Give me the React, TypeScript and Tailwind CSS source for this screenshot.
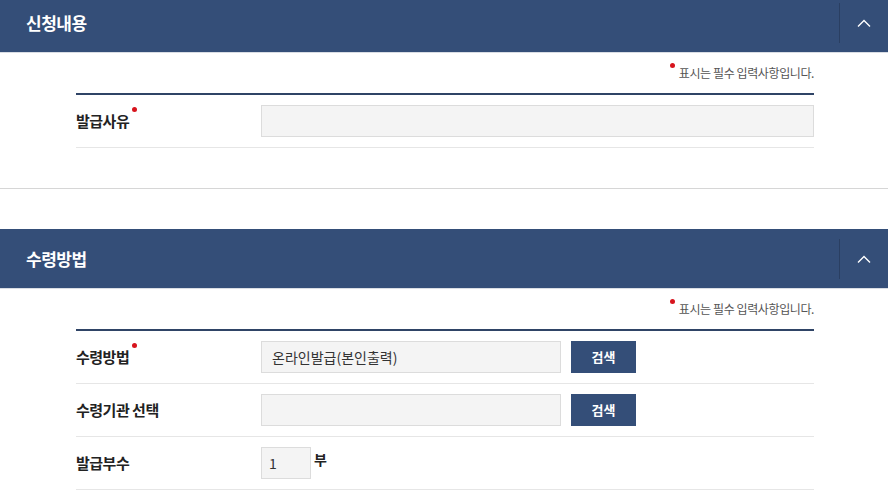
import React from 'react'

const font = { fontFamily: '"Noto Sans CJK KR", "Noto Sans", sans-serif' }

function SectionHeader({ title, shift }: { title: string; shift?: boolean }) {
  return (
    <div
      className={`flex items-center justify-between h-[60px] bg-[#344e78] border-b border-[#d9dde4] ${
        shift ? '-mt-[7px]' : ''
      }`}
    >
      <h2 className="pl-[26px] text-[17px] font-bold text-white tracking-[-0.5px]">{title}</h2>
      <div className="flex items-center h-[40px] border-l border-[#2a3f62]">
        <button className="w-[48px] h-full flex items-center justify-center">
          <svg width="14" height="8" viewBox="0 0 14 8" fill="none">
            <path d="M1 7.5L7 1.5L13 7.5" stroke="white" strokeWidth="1.4" />
          </svg>
        </button>
      </div>
    </div>
  )
}

function Required() {
  return <span className="ml-[3px] -mt-[24px] w-[5px] h-[5px] rounded-full bg-[#d7141d] inline-block" />
}

function Note() {
  return (
    <div className="flex justify-end items-start pt-[12px] pb-[12px]">
      <span className="w-[5px] h-[5px] rounded-full bg-[#d7141d] mr-[4px] -mt-[2px]" />
      <span className="text-[12px] leading-[16px] text-[#555] tracking-[-0.4px]">표시는 필수 입력사항입니다.</span>
    </div>
  )
}

function Row({ label, required, children }: { label: string; required?: boolean; children: React.ReactNode }) {
  return (
    <div className="flex items-center h-[53px] border-b border-[#e6e6e6]">
      <div className="w-[185px] flex items-center text-[15px] font-bold text-[#222] tracking-[-0.5px]">
        {label}
        {required && <Required />}
      </div>
      <div className="flex-1 flex items-center">{children}</div>
    </div>
  )
}

function SearchButton() {
  return (
    <button className="ml-[10px] w-[65px] h-[32px] bg-[#344e78] text-white text-[13px] font-bold">
      검색
    </button>
  )
}

export default function App() {
  return (
    <div className="w-[888px] h-[500px] overflow-hidden bg-white" style={font}>
      <SectionHeader title="신청내용" shift />
      <div className="pl-[76px] pr-[74px]">
        <Note />
        <div className="border-t-2 border-[#2f4466]">
          <Row label="발급사유" required>
            <div className="w-full h-[32px] bg-[#f4f4f4] border border-[#dcdcdc]" />
          </Row>
        </div>
      </div>
      <div className="mt-[40px] border-t border-[#d6d6d6]" />
      <div className="mt-[40px]">
        <SectionHeader title="수령방법" />
      </div>
      <div className="pl-[76px] pr-[74px]">
        <Note />
        <div className="border-t-2 border-[#2f4466]">
          <Row label="수령방법" required>
            <div className="w-[300px] h-[32px] bg-[#f4f4f4] border border-[#dcdcdc] flex items-center px-[10px] text-[14px] text-[#333]">
              온라인발급(본인출력)
            </div>
            <SearchButton />
          </Row>
          <Row label="수령기관 선택">
            <div className="w-[300px] h-[32px] bg-[#f4f4f4] border border-[#dcdcdc]" />
            <SearchButton />
          </Row>
          <Row label="발급부수">
            <div className="w-[50px] h-[32px] bg-[#f4f4f4] border border-[#dcdcdc] flex items-center px-[7px] text-[14px] text-[#333]">
              1
            </div>
            <span className="ml-[3px] self-start mt-[2px] text-[14px] font-bold text-[#222]">부</span>
          </Row>
        </div>
      </div>
    </div>
  )
}
